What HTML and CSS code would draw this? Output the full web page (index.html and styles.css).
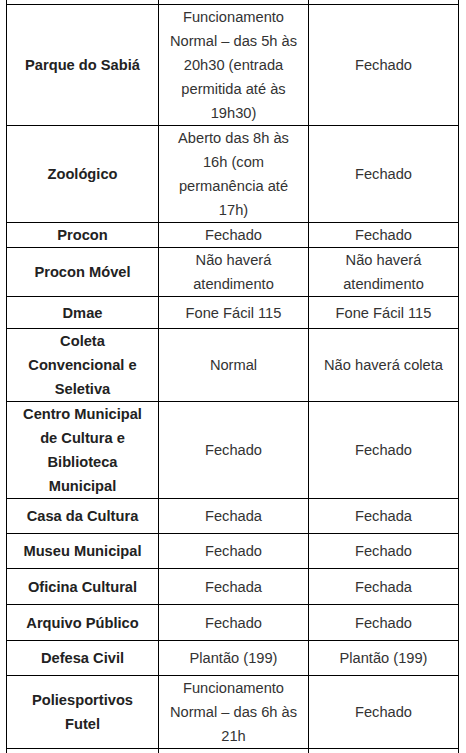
FILE: index.html
```html
<!DOCTYPE html>
<html lang="pt-BR">
<head>
<meta charset="utf-8">
<title>Funcionamento</title>
<link rel="stylesheet" href="styles.css">
</head>
<body>
<table class="schedule">
  <colgroup>
    <col class="c1">
    <col class="c2">
    <col class="c3">
  </colgroup>
  <tbody>
    <tr class="r-prev"><td class="name"></td><td></td><td></td></tr>
    <tr><td class="name">Parque do Sabiá</td><td>Funcionamento Normal – das 5h às 20h30 (entrada permitida até às 19h30)</td><td>Fechado</td></tr>
    <tr><td class="name">Zoológico</td><td>Aberto das 8h às 16h (com permanência até 17h)</td><td>Fechado</td></tr>
    <tr><td class="name">Procon</td><td>Fechado</td><td>Fechado</td></tr>
    <tr><td class="name">Procon Móvel</td><td>Não haverá atendimento</td><td>Não haverá atendimento</td></tr>
    <tr class="r32"><td class="name">Dmae</td><td>Fone Fácil 115</td><td>Fone Fácil 115</td></tr>
    <tr><td class="name">Coleta Convencional e Seletiva</td><td>Normal</td><td>Não haverá coleta</td></tr>
    <tr><td class="name">Centro Municipal de Cultura e Biblioteca Municipal</td><td>Fechado</td><td>Fechado</td></tr>
    <tr class="r35"><td class="name">Casa da Cultura</td><td>Fechada</td><td>Fechada</td></tr>
    <tr class="r35"><td class="name">Museu Municipal</td><td>Fechado</td><td>Fechado</td></tr>
    <tr class="r36"><td class="name">Oficina Cultural</td><td>Fechada</td><td>Fechada</td></tr>
    <tr class="r36"><td class="name">Arquivo Público</td><td>Fechado</td><td>Fechado</td></tr>
    <tr class="r35"><td class="name">Defesa Civil</td><td>Plantão (199)</td><td>Plantão (199)</td></tr>
    <tr><td class="name">Poliesportivos Futel</td><td>Funcionamento Normal – das 6h às 21h</td><td>Fechado</td></tr>
    <tr class="r-next"><td class="name"></td><td></td><td></td></tr>
  </tbody>
</table>
</body>
</html>
```
FILE: styles.css
```css
html, body {
  margin: 0;
  padding: 0;
  background: #ffffff;
}

body {
  font-family: "Liberation Sans", Arial, sans-serif;
  font-size: 11pt;
  line-height: 24px;
  color: #333333;
}

.schedule {
  border-collapse: collapse;
  table-layout: fixed;
  width: 453px;
  margin: -36px 0 0 6px;
}

.c1 { width: 152px; }
.c2 { width: 150px; }

.schedule td {
  border: 1px solid #000000;
  padding: 0 8px;
  text-align: center;
  vertical-align: middle;
}

.schedule td.name {
  font-weight: bold;
  color: #222222;
}

.r-prev { height: 40px; }
.r-next { height: 40px; }
.r32 { height: 32px; }
.r35 { height: 35px; }
.r36 { height: 36px; }
```
